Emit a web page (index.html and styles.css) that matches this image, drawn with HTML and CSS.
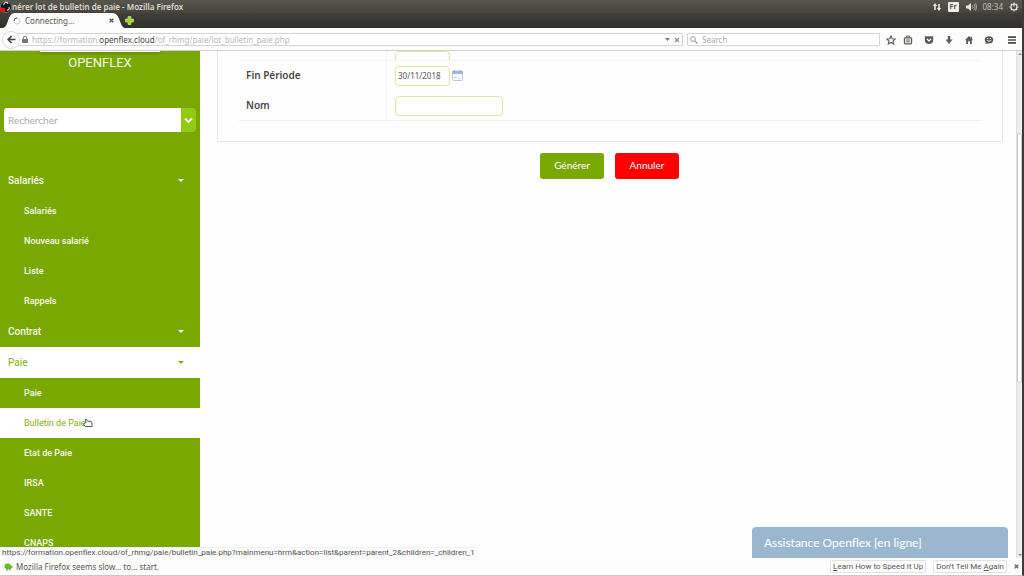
FILE: index.html
```html
<!DOCTYPE html>
<html lang="fr">
<head>
<meta charset="utf-8">
<title>Générer lot de bulletin de paie</title>
<link rel="stylesheet" href="styles.css">
</head>
<body>
<header class="titlebar">
  <svg class="recorder" viewBox="0 0 12 12" aria-hidden="true"><circle cx="6" cy="6" r="5.5" fill="#151515" stroke="#aaa" stroke-width=".5"/><path d="M4 4a2 2 0 0 1 4-1M9 6a2 2 0 0 1-2 3" stroke="#ddd" stroke-width="1.2" fill="none"/><circle cx="3" cy="9" r="2.4" fill="#f11"/></svg>
  <span class="window-title">nérer lot de bulletin de paie - Mozilla Firefox</span>
  <div class="tray">
    <svg width="10" height="10" viewBox="0 0 10 10" aria-hidden="true"><path d="M3 8V3M7 2v5" stroke="#e6e4dc" stroke-width="1.6"/><path d="M.8 4 3 1l2.200 3zM4.800 6 7 9l2.200-3z" fill="#e6e4dc"/></svg>
    <span class="lang">Fr</span>
    <svg width="12" height="10" viewBox="0 0 12 10" aria-hidden="true"><path d="M1 3.500h2L6 1v8L3 6.500H1z" fill="#e6e4dc"/><path d="M7.500 3.200q1.200 1.800 0 3.600M9.200 2.200q1.800 2.800 0 5.600M10.600 1.200q2.200 3.800 0 7.600" stroke="#aaa89f" fill="none"/></svg>
    <span>08:34</span>
    <svg width="10" height="10" viewBox="0 0 10 10" aria-hidden="true"><circle cx="5" cy="5" r="3" fill="none" stroke="#e6e4dc" stroke-width="1.200"/><path d="M5 .5v4M.5 5H2M8 5h1.500M5 8v1.500M1.800 1.800l1 1M8.200 1.800l-1 1M1.800 8.200l1-1M8.200 8.200l-1-1" stroke="#e6e4dc" stroke-width="1.200"/></svg>
  </div>
</header>
<div class="tabs">
  <div class="tab">
    <svg class="tab-shape" viewBox="0 0 122 15" preserveAspectRatio="none" aria-hidden="true"><path d="M0 15C6 14 4 0 12 0H109C118 0 116 14 122 15Z" fill="#fcfcfc"/></svg>
    <svg class="spinner" width="8" height="8" viewBox="0 0 8 8" aria-hidden="true"><circle cx="4" cy="4" r="3" fill="none" stroke="#ccc"/><path d="M1 4a3 3 0 0 1 3-3" fill="none" stroke="#555"/></svg>
    <span class="tab-name">Connecting…</span>
    <button class="plain" aria-label="Close tab"><svg width="5" height="5" viewBox="0 0 5 5"><path d="m.7.7 3.600 3.600m0-3.600L.7 4.300" stroke="#555" stroke-width="1.300"/></svg></button>
  </div>
  <button class="plain new-tab" aria-label="New tab"><svg width="9" height="9" viewBox="0 0 9 9"><path d="M3 .5h3V3h2.500v3H6v2.500H3V6H.5V3H3z" fill="#9fd22c" stroke="#d3ec8e" stroke-width=".6"/></svg></button>
</div>
<nav class="toolbar">
  <button class="plain back" aria-label="Back"><svg width="9" height="9" viewBox="0 0 9 9"><path d="M4.500 1 1.200 4.500l3.300 3.500M1.500 4.500H8.500" stroke="#444" stroke-width="1.700" fill="none"/></svg></button>
  <div class="address">
    <svg width="6" height="7" viewBox="0 0 6 7" aria-hidden="true"><rect y="3" width="6" height="4" fill="#777"/><path d="M1.300 3V2a1.700 1.500 0 0 1 3.400 0v1" stroke="#777" fill="none"/></svg>
    <span class="url">https://formation.<b>openflex.cloud</b>/of_rhmg/paie/lot_bulletin_paie.php</span>
    <svg width="5" height="3" viewBox="0 0 5 3" aria-hidden="true"><path d="M0 0h5L2.500 3z" fill="#777"/></svg>
    <button class="plain" aria-label="Stop"><svg width="6" height="6" viewBox="0 0 6 6"><path d="m1 1 4 4m0-4L1 5" stroke="#888" stroke-width="1.100"/></svg></button>
  </div>
  <label class="web-search">
    <svg width="8" height="8" viewBox="0 0 8 8" aria-hidden="true"><circle cx="3" cy="3" r="2.300" fill="none" stroke="#999"/><path d="m4.800 4.800 2.700 2.700" stroke="#999" stroke-width="1.200"/></svg>
    <input type="text" placeholder="Search" aria-label="Search">
  </label>
  <div class="tools">
    <button class="plain" aria-label="Bookmark"><svg viewBox="0 0 10 10"><path d="m5 1 1.200 2.700 3 .3L7 6l.7 3L5 7.500 2.300 9 3 6 .8 4l3-.3z" fill="none" stroke="#5c5c58" stroke-width="1.100"/></svg></button>
    <button class="plain clips" aria-label="Bookmarks list"><svg viewBox="0 0 10 10"><rect x="1.500" y="2.800" width="7" height="6" rx=".8" fill="none" stroke="#5c5c58" stroke-width="1.300"/><path d="M3.500 2.800V1h3v1.800M3.200 5h3.600M3.200 6.800h3.600" stroke="#5c5c58" fill="none"/></svg></button>
    <button class="plain" aria-label="Pocket"><svg viewBox="0 0 10 10"><path d="M.8 1.200h8.400V5a4.200 4 0 0 1-8.400 0z" fill="#5c5c58"/><path d="m3 4 2 1.900L7 4" stroke="#fff" stroke-width="1.100" fill="none"/></svg></button>
    <button class="plain" aria-label="Downloads"><svg viewBox="0 0 10 10"><path d="M3.800 1h2.400v3.500h2.300L5 9 1.500 4.500h2.300z" fill="#5c5c58"/></svg></button>
    <button class="plain" aria-label="Home"><svg viewBox="0 0 10 10"><path d="M5 1 .8 5.200h1.400V9H4V6.200h2V9h1.800V5.200h1.400L8 4V1.800H6.800v1z" fill="#5c5c58"/></svg></button>
    <button class="plain" aria-label="Chat"><svg viewBox="0 0 10 10"><ellipse cx="5" cy="4.800" rx="4.300" ry="3.600" fill="#5c5c58"/><path d="m2 7-.6 2.200L4.500 8z" fill="#5c5c58"/><path d="M2.800 5.200q2.200 2.300 4.400 0M3 3.600h1.200M5.800 3.600H7" stroke="#fff" stroke-width=".8" fill="none"/></svg></button>
  </div>
  <button class="plain" aria-label="Menu"><svg width="10" height="10" viewBox="0 0 10 10"><path d="M1 2.200h8M1 5h8M1 7.800h8" stroke="#4c4c48" stroke-width="1.700"/></svg></button>
</nav>

<div class="viewport">
  <aside class="sidebar">
    <div class="dropped-edge"></div>
    <h1 class="brand">OPENFLEX</h1>
    <div class="finder">
      <input type="text" placeholder="Rechercher" aria-label="Rechercher">
      <button aria-label="Options"><svg width="9" height="7" viewBox="0 0 9 7"><path d="m1 1.500 3.500 3.500L8 1.500" stroke="#fff" stroke-width="1.800" fill="none"/></svg></button>
    </div>
    <nav class="menu">
      <a class="group" href="#">Salariés</a>
      <a class="item" href="#">Salariés</a>
      <a class="item" href="#">Nouveau salarié</a>
      <a class="item" href="#">Liste</a>
      <a class="item" href="#">Rappels</a>
      <a class="group" href="#">Contrat</a>
      <a class="group active" href="#">Paie</a>
      <a class="item" href="#">Paie</a>
      <a class="item active" href="#">Bulletin de Paie<svg class="pointer" width="10" height="10" viewBox="0 0 10 10" aria-hidden="true"><path d="M1 5.500 3.200 4.300 2 1.700 3.200 1l1.600 2.300H8L9 5v3.500H2.500L.8 7z" fill="#fff" stroke="#444" stroke-width=".9"/></svg></a>
      <a class="item" href="#">Etat de Paie</a>
      <a class="item" href="#">IRSA</a>
      <a class="item" href="#">SANTE</a>
      <a class="item" href="#">CNAPS</a>
    </nav>
  </aside>
  <main class="content">
    <form class="card">
      <div class="row cut">
        <span class="caption"></span>
        <div class="field"><input class="date" type="text" aria-label="Début Période"></div>
      </div>
      <div class="row">
        <label class="caption" for="end">Fin Période</label>
        <div class="field"><input class="date" id="end" type="text" value="30/11/2018">
          <svg width="11" height="11" viewBox="0 0 11 11" aria-hidden="true"><rect x=".5" y="1" width="10" height="9.500" rx="1" fill="#fbfcff" stroke="#b9c9e2"/><path d="M0 1h11v3H0z" fill="#9db8df"/><path d="M2.500 0v2.500M8.500 0v2.500" stroke="#8fa9d4"/><path d="M2 7.500h3M6.500 8.500h2" stroke="#b9c9e2"/></svg>
        </div>
      </div>
      <div class="row last">
        <label class="caption" for="name">Nom</label>
        <div class="field"><input class="name" id="name" type="text"></div>
      </div>
    </form>
    <div class="actions">
      <button class="go">Générer</button>
      <button class="cancel">Annuler</button>
    </div>
  </main>
  <div class="scrollbar"><i class="arrow up"></i><div class="thumb"></div><i class="arrow"></i></div>
  <div class="assist">Assistance Openflex [en ligne]</div>
  <div class="link-target">https://formation.openflex.cloud/of_rhmg/paie/bulletin_paie.php?mainmenu=hrm&amp;action=list&amp;parent=parent_2&amp;children=_children_1</div>
</div>

<footer class="notice">
  <svg width="9" height="8" viewBox="0 0 9 8" aria-hidden="true"><path d="M.5 3.500A3 3 0 0 1 3.500.5h1a3 3 0 0 1 2.500 2.500h1.500v2.200H7l-.5 2H5.200L4.500 5.500 3.500 7.500H2V5.200H.5z" fill="#6cb52d"/></svg>
  <span class="message">Mozilla Firefox seems slow… to… start.</span>
  <button class="choice"><u>L</u>earn How to Speed It Up</button>
  <button class="choice">Don't Tell Me <u>A</u>gain</button>
  <button class="plain" aria-label="Dismiss"><svg width="5" height="5" viewBox="0 0 5 5"><path d="m.7.7 3.600 3.600m0-3.600L.7 4.300" stroke="#666" stroke-width="1.300"/></svg></button>
</footer>
</body>
</html>
```
FILE: styles.css
```css
* { box-sizing: border-box; }
body {
  margin: 0;
  height: 100vh;
  display: flex;
  flex-direction: column;
  overflow: hidden;
  background: #fefefe;
  border-right: 2px solid #3c3b37;
  border-bottom: 1px solid #c8c8c8;
  font: 8px/10px "Noto Sans", sans-serif;
  color: #555;
}
svg { display: block; flex: none; }
input, button { font: inherit; color: inherit; margin: 0; }
.plain { border: 0; padding: 0; background: none; display: flex; }

.titlebar {
  height: 13px;
  flex: none;
  display: flex;
  align-items: center;
  background: linear-gradient(#57564e, #45443e);
  color: #dfdbd2;
}
.recorder { width: 12px; height: 12px; }
.window-title { flex: 1; font-weight: 600; }
.tray { display: flex; align-items: center; gap: 6px; padding-right: 3px; color: #c4c1b8; }
.lang { background: #eceae4; color: #555; padding: 0 2px; font-size: 7px; font-weight: bold; border-radius: 1px; }

.tabs {
  height: 15px;
  flex: none;
  display: flex;
  align-items: center;
  padding-left: 3px;
  background: linear-gradient(#403f3a, #302f2b);
}
.tab {
  position: relative;
  width: 122px;
  height: 15px;
  display: flex;
  align-items: center;
  gap: 4px;
  padding: 0 11px 0 10px;
}
.tab > * { position: relative; }
.tab .tab-shape { position: absolute; inset: 0; width: 100%; height: 100%; }
.tab-name { flex: 1; }

.toolbar {
  height: 23px;
  flex: none;
  display: flex;
  align-items: center;
  padding: 1px 5px 0 2px;
  background: #fcfcfc;
  border-bottom: 1px solid #d0d0d0;
}
.back {
  width: 18px;
  height: 18px;
  border: 1px solid #ddd;
  border-radius: 50%;
  background: #fdfdfd;
  align-items: center;
  justify-content: center;
  z-index: 1;
}
.address, .web-search {
  height: 13px;
  display: flex;
  align-items: center;
  gap: 4px;
  border: 1px solid #d4d4d4;
  border-radius: 1px;
  background: #fff;
}
.address { flex: 1; margin-left: -4px; padding: 0 2px 0 5px; }
.url { flex: 1; color: #b8b8b8; white-space: nowrap; }
.url b { color: #444; font-weight: normal; }
.web-search { width: 193px; margin-left: 4px; padding-left: 2px; }
.web-search input { flex: 1; min-width: 0; border: 0; padding: 0; outline: 0; background: none; }
.web-search input::placeholder { color: #aaa; }
.tools { display: flex; align-items: center; gap: 10px; margin: 0 13px 0 6px; }
.tools .clips { margin: 0 1px 0 -3px; }
.tools svg { width: 10px; height: 10px; }

.viewport { position: relative; flex: 1; min-height: 0; display: flex; overflow: hidden; }
.sidebar {
  position: relative;
  width: 200px;
  flex: none;
  background: #7aa802;
  color: #f4f9e6;
  font-family: Roboto, sans-serif;
  overflow: hidden;
}
.dropped-edge { width: 120px; height: 1px; margin: 0 auto; background: #fff; box-shadow: 0 1px 3px #3c5500; }
.brand { margin: 3px 0 0; text-align: center; font-size: 13px; line-height: 16px; font-weight: normal; }
.finder { display: flex; height: 24px; margin: 37px 4px 33px; border-radius: 3px; overflow: hidden; }
.finder input {
  flex: 1;
  min-width: 0;
  border: 0;
  padding: 0 4px;
  background: #fff;
  font: 10px/16px Lato, sans-serif;
}
.finder input::placeholder { color: #aaa; }
.finder button { width: 15px; border: 0; padding: 0; background: #93c90e; display: flex; align-items: center; justify-content: center; }
.menu a { display: flex; align-items: center; color: inherit; text-decoration: none; }
.menu .group { height: 31px; padding: 0 16px 0 8px; font-size: 10px; font-weight: 500; justify-content: space-between; }
.group::after { content: ""; border: 3px solid transparent; border-top-color: currentColor; border-bottom: 0; }
.menu .item { height: 30px; padding-left: 24px; font-size: 9px; font-weight: 500; }
.menu .active { background: #fff; color: #7fae10; font-weight: normal; }
.pointer { margin-left: -3px; }

.content { flex: 1; padding: 0 13px 0 17px; }
.card { border: 1px solid #e8e8e8; border-top: 0; padding: 0 21px 20px; }
.row { display: grid; grid-template-columns: 148px 1fr; height: 30px; border-top: 1px solid #f4f4f4; }
.row.cut { height: 9px; border: 0; overflow: hidden; }
.row.last { height: 31px; border-top-color: transparent; border-bottom: 1px solid #f0f0f0; }
.caption { display: flex; align-items: center; padding: 0 0 2px 7px; border-right: 1px solid #f6f6f6; font-size: 10px; line-height: 16px; font-weight: 600; color: #484848; }
.field { display: flex; align-items: center; gap: 2px; padding-left: 8px; }
.cut .field { align-items: flex-end; padding-bottom: 4px; }
.field input { height: 20px; border: 1px solid #d9e8a8; border-radius: 4px; padding: 0 2px; background: #fff; font-size: 8px; }
.field .date { width: 55px; }
.field .name { width: 108px; }
.actions { display: flex; justify-content: center; gap: 11px; padding: 11px 1px 0 0; }
.actions button { width: 64px; height: 26px; border: 0; border-radius: 3px; padding: 0 0 2px; color: #fff; font: 10px/16px Lato, sans-serif; }
.actions .go { background: #7aa802; }
.actions .cancel { background: #fe0000; }

.scrollbar { width: 6px; display: flex; flex-direction: column; align-items: center; background: #efedec; border-left: 1px solid #ddd; padding: 2px 0; }
.thumb { width: 5px; height: 250px; margin: 78px 0 auto; border: 1px solid #ccc; border-radius: 2px; background: #fff; }
.arrow { border: 2px solid transparent; border-top-color: #888; border-bottom: 0; }
.arrow.up { border-top: 0; border-bottom: 2px solid #888; }

.assist {
  position: absolute;
  right: 14px;
  bottom: 0;
  width: 256px;
  padding: 8px 12px 7px;
  border-radius: 4px 4px 0 0;
  background: #9bb7d0;
  color: #fff;
  font: 12px/16px Lato, sans-serif;
}
.link-target { position: absolute; left: 0; bottom: 0; padding: 0 2px; background: #fafafa; border-top: 1px solid #f0f0f0; white-space: nowrap; font-family: Roboto, sans-serif; }

.notice { height: 17px; flex: none; display: flex; align-items: center; gap: 3px; padding: 0 3px 0 4px; background: #fdfdfd; }
.message { flex: 1; }
.choice { border: 1px solid #e2e2e2; border-radius: 2px; background: #fefefe; padding: 0 2px; margin-right: 4px; line-height: 11px; font-family: Roboto, sans-serif; }
```
